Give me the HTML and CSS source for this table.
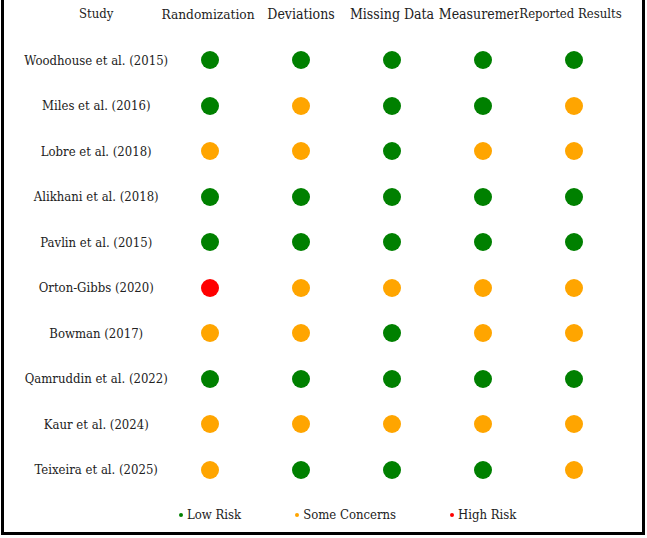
FILE: index.html
```html
<!DOCTYPE html>
<html>
<head>
<meta charset="utf-8">
<link rel="stylesheet" href="styles.css">
</head>
<body>
<div class="frame">
  <div class="grid">
    <div class="hd study">Study</div>
    <div class="hd rand">Randomization</div>
    <div class="hd">Deviations</div>
    <div class="hd">Missing Data</div>
    <div class="hd meas">Measurement</div>
    <div class="hd rep"><span>Reported Results</span></div>

    <div class="name">Woodhouse et al. (2015)</div>
    <div class="cell"><span class="dot g"></span></div><div class="cell"><span class="dot g"></span></div><div class="cell"><span class="dot g"></span></div><div class="cell"><span class="dot g"></span></div><div class="cell"><span class="dot g"></span></div>

    <div class="name">Miles et al. (2016)</div>
    <div class="cell"><span class="dot g"></span></div><div class="cell"><span class="dot o"></span></div><div class="cell"><span class="dot g"></span></div><div class="cell"><span class="dot g"></span></div><div class="cell"><span class="dot o"></span></div>

    <div class="name">Lobre et al. (2018)</div>
    <div class="cell"><span class="dot o"></span></div><div class="cell"><span class="dot o"></span></div><div class="cell"><span class="dot g"></span></div><div class="cell"><span class="dot o"></span></div><div class="cell"><span class="dot o"></span></div>

    <div class="name">Alikhani et al. (2018)</div>
    <div class="cell"><span class="dot g"></span></div><div class="cell"><span class="dot g"></span></div><div class="cell"><span class="dot g"></span></div><div class="cell"><span class="dot g"></span></div><div class="cell"><span class="dot g"></span></div>

    <div class="name">Pavlin et al. (2015)</div>
    <div class="cell"><span class="dot g"></span></div><div class="cell"><span class="dot g"></span></div><div class="cell"><span class="dot g"></span></div><div class="cell"><span class="dot g"></span></div><div class="cell"><span class="dot g"></span></div>

    <div class="name">Orton-Gibbs (2020)</div>
    <div class="cell"><span class="dot r"></span></div><div class="cell"><span class="dot o"></span></div><div class="cell"><span class="dot o"></span></div><div class="cell"><span class="dot o"></span></div><div class="cell"><span class="dot o"></span></div>

    <div class="name">Bowman (2017)</div>
    <div class="cell"><span class="dot o"></span></div><div class="cell"><span class="dot o"></span></div><div class="cell"><span class="dot g"></span></div><div class="cell"><span class="dot o"></span></div><div class="cell"><span class="dot o"></span></div>

    <div class="name">Qamruddin et al. (2022)</div>
    <div class="cell"><span class="dot g"></span></div><div class="cell"><span class="dot g"></span></div><div class="cell"><span class="dot g"></span></div><div class="cell"><span class="dot g"></span></div><div class="cell"><span class="dot g"></span></div>

    <div class="name">Kaur et al. (2024)</div>
    <div class="cell"><span class="dot o"></span></div><div class="cell"><span class="dot o"></span></div><div class="cell"><span class="dot o"></span></div><div class="cell"><span class="dot o"></span></div><div class="cell"><span class="dot o"></span></div>

    <div class="name">Teixeira et al. (2025)</div>
    <div class="cell"><span class="dot o"></span></div><div class="cell"><span class="dot g"></span></div><div class="cell"><span class="dot g"></span></div><div class="cell"><span class="dot g"></span></div><div class="cell"><span class="dot o"></span></div>
  </div>
  <div class="legend">
    <span class="item"><span class="ldot g"></span>Low Risk</span>
    <span class="item"><span class="ldot o"></span>Some Concerns</span>
    <span class="item"><span class="ldot r"></span>High Risk</span>
  </div>
</div>
</body>
</html>
```
FILE: styles.css
```css
html, body {
  margin: 0;
  padding: 0;
  background: #fff;
}
body {
  font-family: "DejaVu Serif Condensed", "DejaVu Serif", serif;
  font-stretch: condensed;
  font-size: 13px;
  color: #222;
}
.frame {
  margin-left: 1px;
  width: 638px;
  height: 532px;
  border: 3px solid #000;
  border-top: none;
}
.grid {
  display: grid;
  grid-template-columns: 160.5px repeat(5, 91px);
  grid-template-rows: 37.25px repeat(10, 45.5px);
}
.hd {
  display: flex;
  justify-content: center;
  white-space: nowrap;
  font-size: 14px;
  line-height: 16px;
  padding-top: 6px;
}
.hd.study {
  font-size: 13px;
  padding-left: 24px;
}
.hd.rand {
  font-size: 13.6px;
  margin-right: 4px;
}
.hd.meas {
  position: relative;
  z-index: 1;
}
.hd.rep {
  position: relative;
  z-index: 2;
  font-size: 13px;
  margin-left: -7px;
}
.hd.rep span {
  background: #fff;
  align-self: flex-start;
}
.name {
  padding-left: 24px;
  display: flex;
  align-items: center;
  justify-content: center;
  white-space: nowrap;
}
.cell {
  display: flex;
  align-items: center;
  justify-content: center;
}
.dot {
  width: 18px;
  height: 18px;
  border-radius: 50%;
  display: block;
}
.g { background: #008000; }
.o { background: #ffa500; }
.r { background: #ff0000; }
.legend {
  margin-top: 15px;
  padding-left: 175px;
  display: flex;
  gap: 54px;
  line-height: 16px;
}
.item {
  display: flex;
  align-items: center;
  gap: 4px;
}
.ldot {
  width: 4px;
  height: 4px;
  border-radius: 50%;
  display: block;
}
```
